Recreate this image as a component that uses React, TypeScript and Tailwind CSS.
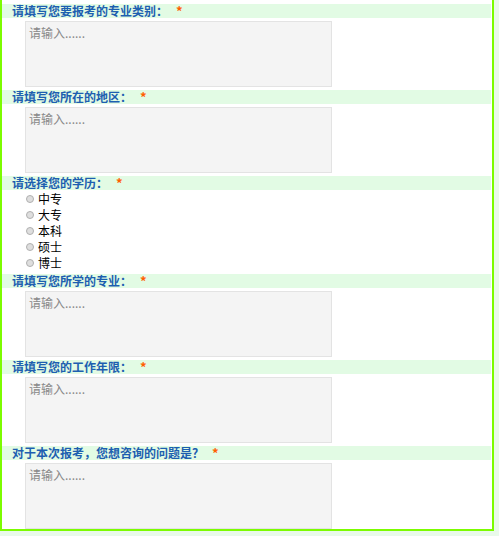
const FONT = { fontFamily: '"Microsoft YaHei", "Noto Sans CJK SC", "Noto Sans", sans-serif' };

const EDUCATION = ["中专", "大专", "本科", "硕士", "博士"];

function Label({ text }: { text: string }) {
  return (
    <div className="mr-px flex h-[14px] items-center bg-[#e2fbe4] pl-[10px] text-[12px] font-bold leading-[14px] text-[#1d5fb0]">
      <span>{text}</span>
      <span className="ml-[8px] self-start text-[13px] font-bold leading-[13px] text-[#ff6000]">*</span>
    </div>
  );
}

function TextField({ label }: { label: string }) {
  return (
    <div>
      <Label text={label} />
      <textarea
        placeholder="请输入......"
        className="ml-[23px] mt-[3px] block h-[66px] w-[307px] resize-none border border-[#e3e3e3] bg-[#f4f4f4] px-[3px] py-[3px] text-[12px] leading-[16px] outline-none placeholder:text-[#888888]"
        style={FONT}
      />
    </div>
  );
}

export default function App() {
  return (
    <div className="min-h-screen bg-[#e9f9ea]" style={FONT}>
      <div className="flex w-[494px] flex-col gap-[3px] border-x-2 border-b-2 border-[#7cfc00] bg-white pt-[4px]">
        <TextField label="请填写您要报考的专业类别：" />
        <TextField label="请填写您所在的地区：" />
        <div>
          <Label text="请选择您的学历：" />
          <div className="pt-px">
            {EDUCATION.map((e) => (
              <label key={e} className="flex h-[16px] items-center text-[12px] leading-[16px] text-black">
                <span className="ml-[24px] mr-[4px] h-[8px] w-[8px] rounded-full border border-[#b0b0b0] bg-[#dedede]" />
                {e}
              </label>
            ))}
          </div>
        </div>
        <TextField label="请填写您所学的专业：" />
        <TextField label="请填写您的工作年限：" />
        <TextField label="对于本次报考，您想咨询的问题是？" />
      </div>
    </div>
  );
}
